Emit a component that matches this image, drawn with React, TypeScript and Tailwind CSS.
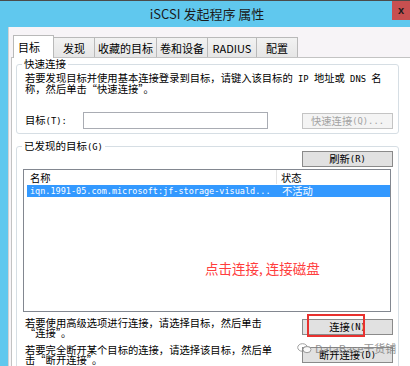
import React from "react";

const M = ({ children }: { children: React.ReactNode }) => (
  <span className="font-['DejaVu_Sans_Mono','Liberation_Mono',monospace] text-[8.8px]">{children}</span>
);

const Btn = ({
  children,
  disabled,
  className = "",
}: {
  children: React.ReactNode;
  disabled?: boolean;
  className?: string;
}) => (
  <div
    className={
      "w-[91px] h-[16px] flex items-center justify-center text-[10.3px] leading-[10px] border " +
      (disabled
        ? "border-[#c4c4c4] bg-[#f4f4f4] text-[#a3a3a3] "
        : "border-[#8a8a8a] bg-[#e1e1e1] text-black ") +
      className
    }
  >
    {children}
  </div>
);

const tabs = [
  { label: "发现", w: "w-[42px]" },
  { label: "收藏的目标", w: "w-[63px]" },
  { label: "卷和设备", w: "w-[52px]" },
  { label: "RADIUS", w: "w-[50px]" },
  { label: "配置", w: "w-[42px]" },
];

export default function App() {
  return (
    <div className="relative w-[410px] h-[366px] overflow-hidden bg-[#60c8ee] font-['Noto_Sans_CJK_SC','Noto_Sans',sans-serif] text-black">
      {/* title bar */}
      <div className="relative h-[27px] border-t border-[#4b4b4b] flex items-center justify-center">
        <span className="text-[13px] leading-[14px] text-[#1b1b1b] pl-[4px]">iSCSI 发起程序 属性</span>
        <div className="absolute right-0 top-0 w-[18px] h-[19px] bg-[#c75050] flex items-center justify-center text-[11px] font-bold leading-none text-[#1a1a1a] font-['Liberation_Sans',sans-serif]">
          x
        </div>
      </div>

      <div className="flex h-[339px]">
        <div className="w-[8px] shrink-0" />
        <div className="flex-1 flex flex-col bg-[#f7f4f7] border-l border-[#d2d2d2] pl-[2px]">
          {/* tabs */}
          <div className="h-[30px] shrink-0 flex items-end pl-[2px]">
            <div className="relative z-10 w-[41px] h-[23px] -mb-[1px] bg-white border border-b-0 border-[#b9b9b9] text-[11px] leading-[12px] pl-[4px] pt-[5px]">
              目标
            </div>
            {tabs.map((t) => (
              <div
                key={t.label}
                className={
                  t.w +
                  " h-[20px] -ml-[1px] bg-gradient-to-b from-[#f2f2f2] to-[#e6e6e6] border border-b-0 border-[#b9b9b9] text-[11px] leading-[12px] flex items-center justify-center pt-[1px]"
                }
              >
                {t.label}
              </div>
            ))}
          </div>

          {/* panel */}
          <div className="flex-1 bg-white border-t border-l border-[#c3c3c3] pl-[4px]">
            {/* quick connect group */}
            <div className="relative mt-[6px] w-[383px] border border-[#d6dee4] rounded-[3px] pl-[8px] pr-[5px] pt-[8px] pb-[4px]">
              <div className="absolute left-[5px] -top-[6px] px-[2px] bg-white text-[10.5px] leading-[10px] whitespace-nowrap">
                快速连接
              </div>
              <div className="text-[10.3px] leading-[10px] whitespace-nowrap">
                若要发现目标并使用基本连接登录到目标，请键入该目标的<M> IP </M>地址或<M> DNS </M>名
                <br />
                称，然后单击“快速连接”。
              </div>
              <div className="mt-[18px] h-[17px] flex items-center">
                <div className="w-[58px] text-[10.3px] leading-[10px] whitespace-nowrap">
                  目标<M>(T):</M>
                </div>
                <div className="w-[185px] h-[17px] border border-[#a9acb3] bg-white" />
                <Btn disabled className="ml-[34px]">
                  快速连接<M>(Q)...</M>
                </Btn>
              </div>
            </div>

            {/* discovered targets group */}
            <div className="relative mt-[12px] w-[383px] border border-[#d6dee4] rounded-[3px] pl-[6px] pr-[5px] pt-[4px] pb-[8px]">
              <div className="absolute left-[5px] -top-[6px] px-[2px] bg-white text-[10.5px] leading-[10px] whitespace-nowrap">
                已发现的目标<M>(G)</M>
              </div>
              <div className="flex justify-end">
                <Btn>
                  刷新<M>(R)</M>
                </Btn>
              </div>
              <div className="relative mt-[2px] w-[368px] h-[143px] border border-[#828790] bg-white">
                <div className="h-[14px] flex text-[10.3px] leading-[10px]">
                  <div className="w-[253px] border-r border-[#e3e3e3] pl-[6px] pt-[3px]">名称</div>
                  <div className="pl-[4px] pt-[3px]">状态</div>
                </div>
                <div className="mt-[1px] ml-[3px] h-[12px] bg-[#3399ff] text-white flex items-center">
                  <div className="w-[250px] pl-[3px] font-['DejaVu_Sans_Mono','Liberation_Mono',monospace] text-[8.5px] leading-[10px] whitespace-nowrap">
                    iqn.1991-05.com.microsoft:jf-storage-visuald...
                  </div>
                  <div className="pl-[5px] text-[10.3px] leading-[10px]">不活动</div>
                </div>
                <div className="absolute left-[181px] top-[91px] text-[13.5px] leading-[14px] text-[#ff3d3d] whitespace-nowrap">
                  点击连接, 连接磁盘
                </div>
              </div>

              <div className="mt-[6px] flex justify-between">
                <div className="ml-[2px] text-[10.3px] leading-[10px] whitespace-nowrap">
                  若要使用高级选项进行连接，请选择目标，然后单击
                  <br />
                  “连接”。
                </div>
                <div className="relative mt-[1px]">
                  <Btn>
                    连接<M>(N)</M>
                  </Btn>
                  <div className="absolute left-[5px] -top-[5px] w-[58px] h-[23px] border-2 border-[#e8312f]" />
                </div>
              </div>

              <div className="mt-[7px] flex justify-between">
                <div className="ml-[2px] text-[10.3px] leading-[10px] whitespace-nowrap">
                  若要完全断开某个目标的连接，请选择该目标，然后单
                  <br />
                  击“断开连接”。
                </div>
                <div className="mt-[2px]">
                  <Btn>
                    断开连接<M>(D)</M>
                  </Btn>
                </div>
              </div>
            </div>
          </div>
        </div>
      </div>

      {/* watermark */}
      <div className="absolute left-[297px] top-[342px] flex items-center gap-[3px] opacity-80">
        <svg width="15" height="11" viewBox="0 0 15 11" fill="none" stroke="#8a8a8a" strokeWidth="1">
          <ellipse cx="5.5" cy="4.5" rx="4.8" ry="3.8" />
          <ellipse cx="10" cy="6.5" rx="4" ry="3.2" fill="white" />
        </svg>
        <span className="text-[11px] leading-[12px] text-[#7c7c7c] font-['Noto_Sans_CJK_SC',sans-serif]">
          DataBase干货铺
        </span>
      </div>
    </div>
  );
}
